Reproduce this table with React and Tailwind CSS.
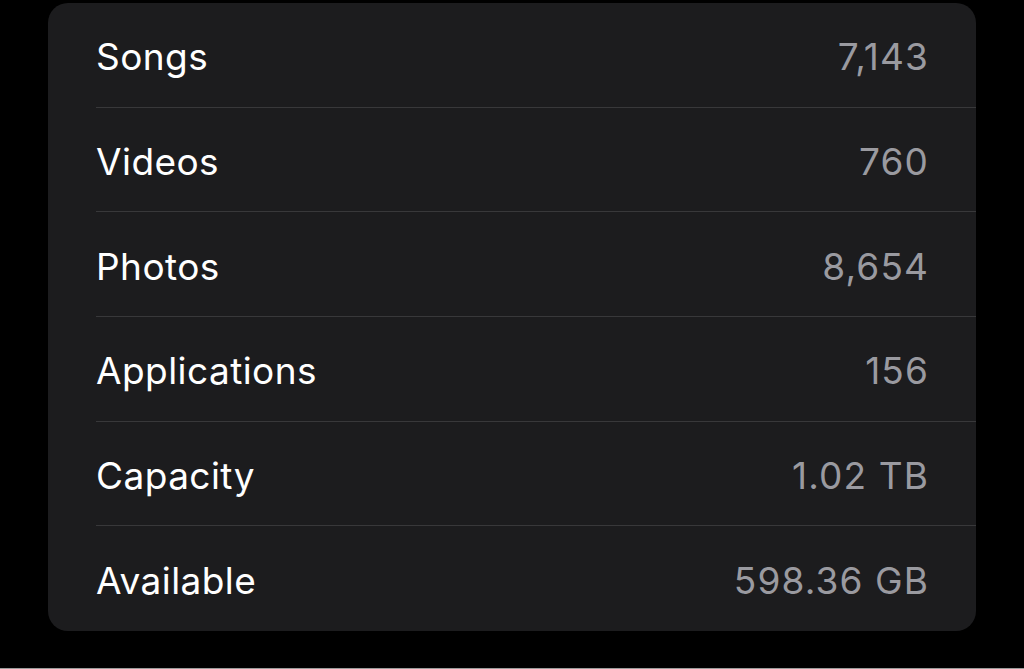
import React from "react";

const rows = [
  ["Songs", "7,143"],
  ["Videos", "760"],
  ["Photos", "8,654"],
  ["Applications", "156"],
  ["Capacity", "1.02 TB"],
  ["Available", "598.36 GB"],
];

export default function App() {
  return (
    <div
      className="w-[1024px] h-[669px] bg-black flex flex-col"
      style={{ fontFamily: "Inter, 'Noto Sans', sans-serif" }}
    >
      <div className="pt-[3px] pl-[48px] pr-[48px]">
        <div className="h-[628px] bg-[#1c1c1e] rounded-[20px] flex flex-col overflow-hidden">
          {rows.map(([label, value], i) => (
            <div key={label} className="flex-1 pl-[48px] flex flex-col">
              <div className="flex-1 flex items-center justify-between pr-[47px] pt-[4px]">
                <span className="text-[37px] text-white tracking-[0.012em] leading-none">{label}</span>
                <span className="text-[37px] text-[#9a9aa0] tracking-[0.03em] leading-none">{value}</span>
              </div>
              {i < rows.length - 1 && <div className="h-px bg-[#38383a]" />}
            </div>
          ))}
        </div>
      </div>
      <div className="flex-1" />
      <div className="h-px bg-[#9c9c9c]" />
    </div>
  );
}
